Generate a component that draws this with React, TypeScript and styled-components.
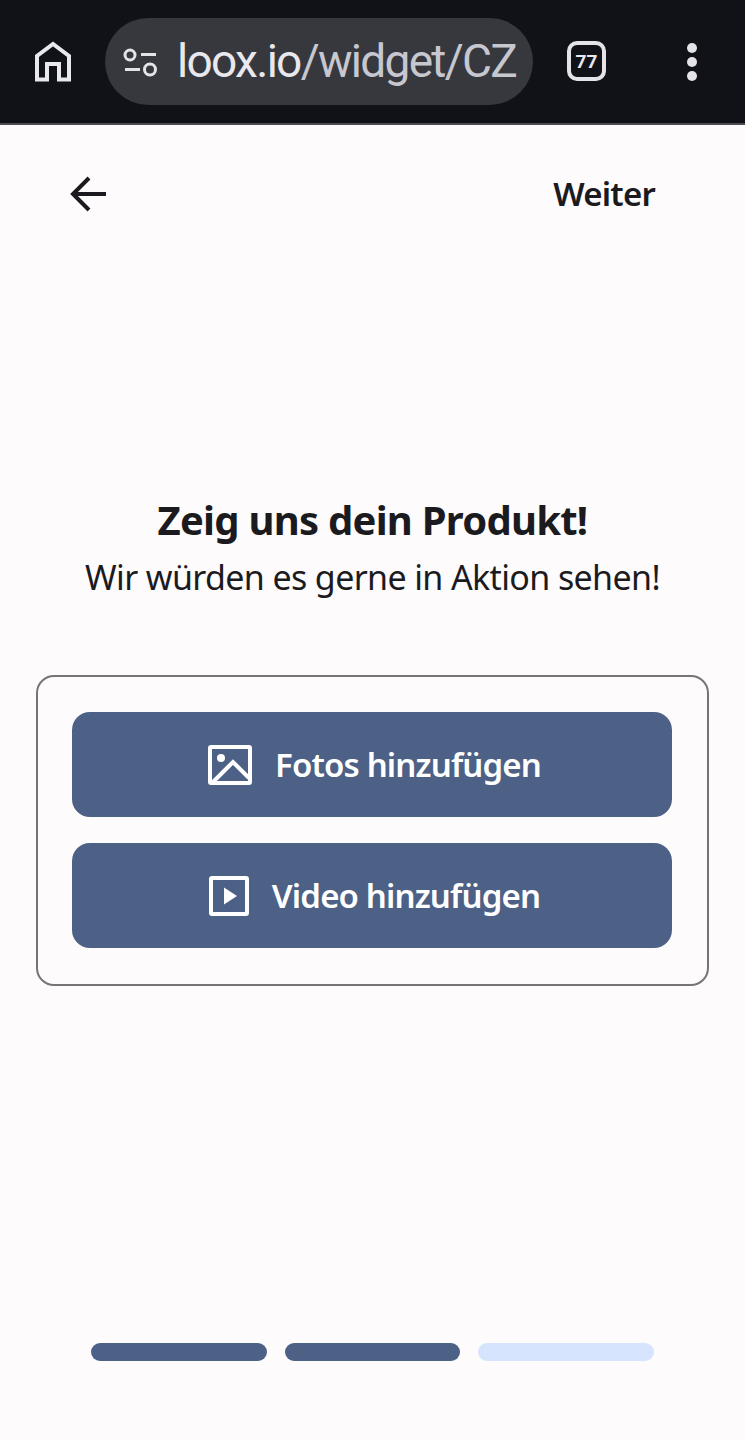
import React from "react";
import styled, { createGlobalStyle } from "styled-components";

const Global = createGlobalStyle`
  html, body { margin: 0; padding: 0; background: #fdfbfc; }
  * { box-sizing: border-box; }
`;

const Page = styled.div`
  width: 745px;
  height: 1440px;
  display: flex;
  flex-direction: column;
  background: #fdfbfc;
  font-family: "Noto Sans", sans-serif;
  color: #1b1b1f;
  overflow: hidden;
`;

const BrowserBar = styled.div`
  height: 125px;
  flex: none;
  background: #111217;
  border-bottom: 2px solid #4a4a50;
  display: flex;
  align-items: flex-start;
  padding: 18px 0 0 34px;
`;

const HomeIcon = styled.svg`
  width: 38px;
  height: 42px;
  margin-top: 22px;
  flex: none;
`;

const Omnibox = styled.div`
  width: 428px;
  height: 87px;
  margin-left: 33px;
  border-radius: 44px;
  background: #37383e;
  display: flex;
  align-items: center;
  padding: 0 16px 0 18px;
  overflow: hidden;
  flex: none;
`;

const TuneIcon = styled.svg`
  width: 36px;
  height: 30px;
  flex: none;
`;

const Url = styled.span`
  margin-left: 18px;
  font-family: "Roboto", sans-serif;
  font-size: 46px;
  font-weight: 450;
  letter-spacing: -1.7px;
  white-space: nowrap;
  color: #c7c7d0;
  line-height: 87px;
  margin-top: -1px;
`;

const UrlHost = styled.span`
  color: #e8e8ee;
`;

const TabCount = styled.div`
  width: 39px;
  height: 40px;
  margin: 23px 0 0 34px;
  border: 4px solid #e3e3e8;
  border-radius: 10px;
  display: flex;
  align-items: center;
  justify-content: center;
  font-family: "Roboto", sans-serif;
  font-size: 19px;
  font-weight: 700;
  color: #e8e8ee;
  flex: none;
`;

const MenuDots = styled.div`
  margin: 25px 0 0 81px;
  display: flex;
  flex-direction: column;
  gap: 4px;
  flex: none;
`;

const Dot = styled.span`
  width: 10px;
  height: 10px;
  border-radius: 50%;
  background: #e3e3e8;
`;

const Header = styled.div`
  height: 137px;
  flex: none;
  display: flex;
  align-items: flex-start;
  justify-content: space-between;
  padding: 50px 90px 0 70px;
`;

const BackIcon = styled.svg`
  width: 38px;
  height: 38px;
  flex: none;
`;

const Next = styled.span`
  font-size: 33px;
  font-weight: 600;
  letter-spacing: -0.8px;
  line-height: 38px;
`;

const Title = styled.h1`
  margin: 232px 0 0;
  text-align: center;
  font-size: 40px;
  font-weight: 700;
  letter-spacing: -0.75px;
  line-height: 52px;
`;

const Subtitle = styled.p`
  margin: 8px 0 0;
  text-align: center;
  font-size: 34px;
  font-weight: 400;
  letter-spacing: -0.63px;
  line-height: 46px;
`;

const Card = styled.div`
  margin: 75px 36px 0;
  height: 311px;
  border: 2px solid #757578;
  border-radius: 18px;
  padding: 35px 35px 0 34px;
  display: flex;
  flex-direction: column;
  gap: 26px;
`;

const ActionButton = styled.button`
  height: 105px;
  padding: 0 0 0 5px;
  border: none;
  border-radius: 18px;
  background: #4c6185;
  color: #fff;
  display: flex;
  align-items: center;
  justify-content: center;
  gap: 23px;
  font-family: inherit;
  font-size: 33px;
  font-weight: 600;
  letter-spacing: -0.85px;
`;

const Steps = styled.div`
  margin-top: auto;
  margin-bottom: 79px;
  padding: 0 91px;
  display: flex;
  gap: 18px;
`;

const Step = styled.div<{ $done: boolean }>`
  flex: 1;
  height: 18px;
  border-radius: 9px;
  background: ${(p) => (p.$done ? "#4c6185" : "#d6e4fd")};
`;

export default function App() {
  return (
    <>
      <Global />
      <Page>
        <BrowserBar>
          <HomeIcon viewBox="0 0 38 42" fill="none" stroke="#e8e8ee" strokeWidth="4">
            <path d="M3 39.500V16L19 4l16 12v23.500H25V24H13v15.500Z" strokeLinejoin="miter" />
          </HomeIcon>
          <Omnibox>
            <TuneIcon viewBox="0 0 36 30" fill="none" stroke="#e3e3e8" strokeWidth="3">
              <circle cx="7" cy="8" r="5" />
              <path d="M18 7.500h15" />
              <path d="M2 22.500h15" />
              <circle cx="27" cy="22.500" r="5.500" />
            </TuneIcon>
            <Url>
              <UrlHost>loox.io</UrlHost>/widget/CZ
            </Url>
          </Omnibox>
          <TabCount>77</TabCount>
          <MenuDots>
            <Dot />
            <Dot />
            <Dot />
          </MenuDots>
        </BrowserBar>
        <Header>
          <BackIcon viewBox="0 0 38 38" fill="none" stroke="#1b1b1f" strokeWidth="4">
            <path d="M19 3 3 19l16 16" />
            <path d="M3 19h33" />
          </BackIcon>
          <Next>Weiter</Next>
        </Header>
        <Title>Zeig uns dein Produkt!</Title>
        <Subtitle>Wir würden es gerne in Aktion sehen!</Subtitle>
        <Card>
          <ActionButton>
            <svg width="44" height="40" viewBox="0 0 44 40" fill="none" stroke="#fff" strokeWidth="4">
              <rect x="2" y="2" width="40" height="36" rx="1" />
              <circle cx="13" cy="13" r="4" fill="#fff" stroke="none" />
              <path d="M5 37 25 17l16 16" />
            </svg>
            Fotos hinzufügen
          </ActionButton>
          <ActionButton>
            <svg width="40" height="40" viewBox="0 0 40 40" fill="none" stroke="#fff" strokeWidth="4">
              <rect x="2" y="2" width="36" height="36" rx="1" />
              <path d="M15 11.500 28 20l-13 8.500Z" fill="#fff" stroke="none" />
            </svg>
            Video hinzufügen
          </ActionButton>
        </Card>
        <Steps>
          <Step $done />
          <Step $done />
          <Step $done={false} />
        </Steps>
      </Page>
    </>
  );
}
